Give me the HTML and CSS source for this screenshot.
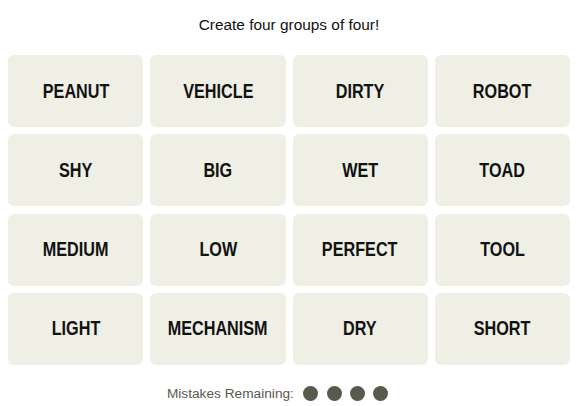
FILE: index.html
```html
<!DOCTYPE html>
<html lang="en">
<head>
  <meta charset="UTF-8" />
  <meta name="viewport" content="width=device-width, initial-scale=1.0" />
  <title>Connections</title>
  <link rel="stylesheet" href="styles.css">
</head>
<body>
  <main class="game">
    <p class="prompt">Create four groups of four!</p>

    <section class="board">
      <button class="tile"><span>PEANUT</span></button>
      <button class="tile"><span>VEHICLE</span></button>
      <button class="tile"><span>DIRTY</span></button>
      <button class="tile"><span>ROBOT</span></button>
      <button class="tile"><span>SHY</span></button>
      <button class="tile"><span>BIG</span></button>
      <button class="tile"><span>WET</span></button>
      <button class="tile"><span>TOAD</span></button>
      <button class="tile"><span>MEDIUM</span></button>
      <button class="tile"><span>LOW</span></button>
      <button class="tile"><span>PERFECT</span></button>
      <button class="tile"><span>TOOL</span></button>
      <button class="tile"><span>LIGHT</span></button>
      <button class="tile"><span>MECHANISM</span></button>
      <button class="tile"><span>DRY</span></button>
      <button class="tile"><span>SHORT</span></button>
    </section>

    <div class="mistakes">
      <span class="label">Mistakes Remaining:</span>
      <span class="dot"></span>
      <span class="dot"></span>
      <span class="dot"></span>
      <span class="dot"></span>
    </div>
  </main>
</body>
</html>
```

FILE: styles.css
```css
:root {
  --tile: #efefe6;
  --ink: #121212;
  --muted: #5a594e;
}

* {
  margin: 0;
  padding: 0;
  box-sizing: border-box;
}

body {
  background: #fff;
  color: var(--ink);
  font-family: 'Liberation Sans', Arial, sans-serif;
}

.game {
  padding: 14px 8px 0;
}

.prompt {
  text-align: center;
  font-size: 15.4px;
  line-height: 21px;
  margin-bottom: 20px;
}

.board {
  display: grid;
  grid-template-columns: repeat(4, 1fr);
  column-gap: 7px;
  row-gap: 7.33px;
}

.tile {
  display: flex;
  align-items: center;
  justify-content: center;
  height: 72px;
  border: none;
  border-radius: 6px;
  background: var(--tile);
  color: var(--ink);
  font-family: 'Liberation Sans', Arial, sans-serif;
  font-weight: 700;
  font-size: 20px;
  cursor: pointer;
}

/* no narrow face installed, so squeeze the bold one */
.tile span {
  display: inline-block;
  transform: scaleX(0.81);
  white-space: nowrap;
}

.mistakes {
  display: flex;
  justify-content: center;
  align-items: center;
  gap: 8.3px;
  margin-top: 21px;
  padding-right: 23px;
  color: var(--muted);
  font-size: 13.7px;
}

.mistakes .label {
  margin-right: 1px;
}

.dot {
  width: 15px;
  height: 15px;
  border-radius: 50%;
  background: var(--muted);
}
```
